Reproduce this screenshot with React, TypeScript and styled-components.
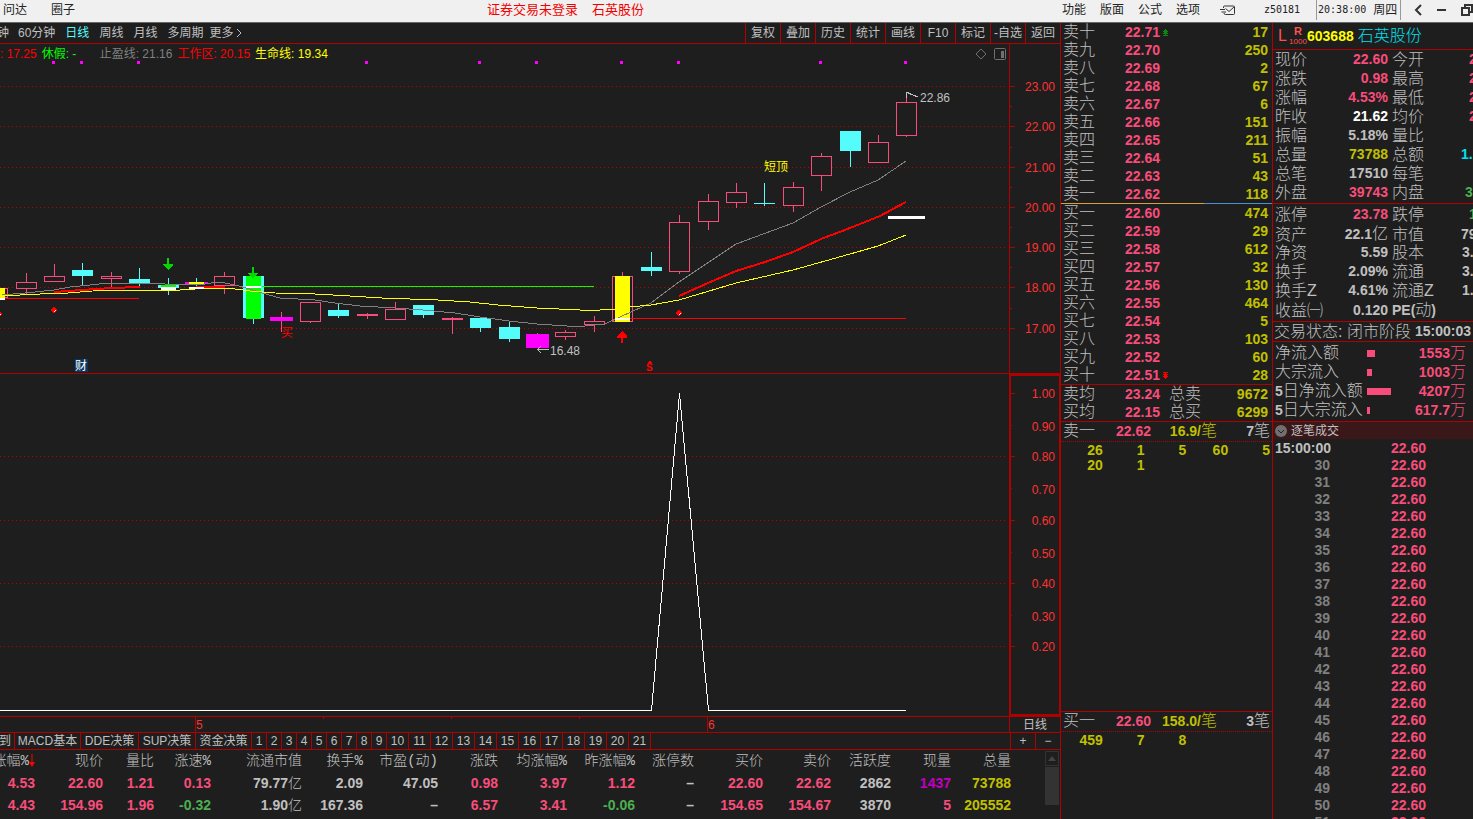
import React from "react";
import styled, { createGlobalStyle } from "styled-components";

const C = {
  bg: "#1e1e1e",
  line: "#b00000",
  text: "#c0c0c0",
  pink: "#f84d7a",
  yellow: "#c0c000",
  cyan: "#54fcfc",
  grey: "#808080",
  green: "#4caf50",
  axis: "#ff3232",
};

const SANS = `"Liberation Sans", "Noto Sans CJK SC", sans-serif`;

const Global = createGlobalStyle`
  * { box-sizing: border-box; }
  html, body { margin: 0; background: ${C.bg}; }
  button { font: inherit; color: inherit; background: none; border: 0; padding: 0; margin: 0; white-space: nowrap; }
`;

/* ---------- shell ---------- */

const Shell = styled.div`
  display: flex;
  flex-direction: column;
  height: 100vh;
  overflow: hidden;
  font: 12px/16px ${SANS};
  color: ${C.text};
`;

const Body = styled.div`
  display: flex;
  flex: 1;
  min-height: 0;
`;

const Workspace = styled.main`
  display: flex;
  flex-direction: column;
  flex: 1;
  min-width: 0;
`;

/* ---------- title bar ---------- */

const TitleBar = styled.header`
  display: flex;
  align-items: center;
  flex: none;
  height: 23px;
  padding-bottom: 2px;
  background: #f0f0f0;
  border-bottom: 1px solid #666;
  color: #222;
  overflow: hidden;
`;

const TitleNav = styled.nav`
  display: flex;
  gap: 24px;
  padding-left: 3px;
`;

const TitleStatus = styled.div`
  display: flex;
  flex: 1;
  justify-content: center;
  gap: 14px;
  padding-right: 5px;
  font-size: 13px;
  color: #f00000;
`;

const TitleTools = styled.div`
  display: flex;
  align-items: center;
  flex: none;
  width: 412px;
  padding-left: 1px;
`;

const MenuSet = styled.div`
  display: flex;
  gap: 14px;
`;

const MailSlot = styled.button`
  display: flex;
  width: 18px;
  margin-left: 20px;
`;

const Account = styled.span`
  flex: none;
  width: 80px;
  padding-left: 12px;
  text-align: center;
  font-family: "DejaVu Sans Mono", "Noto Sans CJK SC", monospace;
  font-size: 10px;
`;

const Clock = styled.div`
  display: flex;
  align-items: center;
  flex: none;
  gap: 7px;
  height: 20px;
  padding: 0 3px 0 1px;
  border-left: 1px solid #999;
  border-right: 1px solid #999;
  white-space: nowrap;
`;

const ClockTime = styled.time`
  font-family: "DejaVu Sans Mono", monospace;
  font-size: 10px;
`;

const WindowButtons = styled.div`
  display: flex;
  flex: none;
  gap: 12px;
  padding-left: 11px;
  button {
    display: flex;
  }
`;

/* ---------- chart toolbar ---------- */

const Toolbar = styled.div`
  display: flex;
  justify-content: space-between;
  flex: none;
  height: 21px;
  border-bottom: 1px solid ${C.line};
`;

const Periods = styled.div`
  display: flex;
  align-items: center;
  gap: 10px;
  overflow: hidden;
`;

const Period = styled.button<{ $on?: boolean; $cut?: boolean; $more?: boolean }>`
  display: flex;
  align-items: center;
  justify-content: flex-end;
  color: ${(p) => (p.$on ? C.cyan : C.text)};
  ${(p) => p.$cut && "width: 9px; margin-right: -1px; overflow: hidden;"}
  ${(p) => p.$more && "margin-left: -4px;"}
`;

const Actions = styled.div`
  display: flex;
`;

const Action = styled.button`
  width: 35px;
  border-left: 1px solid ${C.line};
`;

/* ---------- charts ---------- */

const ChartPane = styled.section<{ $grow: number }>`
  position: relative;
  flex: ${(p) => p.$grow} 1 0;
  min-height: 0;
  svg {
    display: block;
    width: 100%;
    height: 100%;
  }
`;

const Legend = styled.div`
  position: absolute;
  top: 2px;
  left: 0;
  right: 53px;
  display: flex;
  align-items: center;
  gap: 5px;
  height: 16px;
  svg {
    width: 14px;
    height: 14px;
  }
`;

const LegendItem = styled.span<{ $c: string; $w?: number }>`
  color: ${(p) => p.$c};
  white-space: pre;
  min-width: ${(p) => p.$w ?? 0}px;
`;

const LegendTools = styled.div`
  display: flex;
  gap: 5px;
  margin-left: auto;
`;

const DateBar = styled.div`
  display: flex;
  flex: none;
  height: 17px;
  border-top: 1px solid ${C.line};
  border-bottom: 1px solid ${C.line};
`;

const DateTrack = styled.div`
  flex: 1;
  min-width: 0;
  svg {
    display: block;
    width: 100%;
    height: 15px;
  }
`;

const DateMode = styled.button`
  flex: none;
  width: 51px;
  line-height: 14px;
  border-left: 1px solid ${C.line};
`;

const TabBar = styled.div`
  display: flex;
  flex: none;
  height: 17px;
  border-bottom: 1px solid ${C.line};
`;

const Tab = styled.button<{ $w: number }>`
  display: flex;
  justify-content: center;
  width: ${(p) => p.$w}px;
  border-right: 1px solid ${C.line};
`;

const CutTab = styled(Tab)`
  justify-content: flex-end;
  padding-right: 3px;
  overflow: hidden;
`;

const ZoomButtons = styled.div`
  display: flex;
  margin-left: auto;
`;

const ZoomButton = styled.button`
  width: 25px;
  border-left: 1px solid ${C.line};
`;

/* ---------- stock table ---------- */

const TableWrap = styled.div`
  display: flex;
  flex: none;
  height: 69px;
  overflow: hidden;
`;

const TableArea = styled.div`
  flex: 1;
  min-width: 0;
`;

const StockTable = styled.table`
  width: 100%;
  table-layout: fixed;
  border-collapse: collapse;
  font-size: 14px;
  line-height: 22px;
  th,
  td {
    padding: 0;
    text-align: right;
    white-space: nowrap;
  }
  th {
    font-family: "Liberation Mono", "Noto Sans CJK SC", monospace;
    font-weight: 300;
  }
  td {
    font-weight: 700;
  }
`;

const SortHead = styled.span`
  display: flex;
  justify-content: flex-end;
  align-items: center;
`;

const Cell = styled.td<{ $c: string }>`
  color: ${(p) => p.$c};
`;

const ScrollBar = styled.div`
  display: flex;
  flex-direction: column;
  flex: none;
  width: 15px;
  padding: 1px 1px 0 0;
  gap: 1px;
`;

const ScrollUp = styled.button`
  display: flex;
  justify-content: center;
  align-items: center;
  height: 15px;
  border: 1px solid #333;
`;

const ScrollThumb = styled.div`
  height: 38px;
  background: #333;
`;

/* ---------- order book ---------- */

const Book = styled.aside`
  display: flex;
  flex-direction: column;
  flex: none;
  width: 212px;
  border-left: 1px solid ${C.line};
`;

const Cjk = styled.span<{ $s?: number }>`
  font-weight: 300;
  font-size: ${(p) => p.$s ?? 16}px;
`;

const Label = styled.span`
  font-size: 16px;
  font-weight: 300;
  white-space: nowrap;
`;

const Value = styled.span<{ $c?: string; $right?: boolean }>`
  font-size: 14px;
  font-weight: 700;
  color: ${(p) => p.$c ?? C.text};
  text-align: ${(p) => (p.$right ? "right" : "left")};
  white-space: nowrap;
`;

const BookRow = styled.div`
  display: grid;
  grid-template-columns: 62px 38px 6px 1fr;
  align-items: center;
  height: 18px;
  line-height: 18px;
  padding: 0 4px 0 2px;
`;

const TotalsRow = styled(BookRow)`
  grid-template-columns: 62px 44px 32px 1fr;
`;

const Totals = styled.div`
  border-top: 1px solid ${C.line};
  border-bottom: 1px solid ${C.line};
`;

const Balance = styled.div`
  height: 1px;
  background: linear-gradient(90deg, #d9a040 0 68%, #4a8fd0 68%);
`;

const Queue = styled.section<{ $grow?: boolean }>`
  flex: ${(p) => (p.$grow ? "1 1 0" : "none")};
  height: 107px;
  border-bottom: ${(p) => (p.$grow ? `1px solid ${C.line}` : "0")};
`;

const QueueHead = styled.div`
  display: grid;
  grid-template-columns: 53px 36px 65px 1fr;
  height: 20px;
  line-height: 18px;
  padding: 0 2px;
  border-bottom: 1px dotted ${C.line};
`;

const QueueGrid = styled.div`
  display: grid;
  grid-template-columns: repeat(5, 1fr);
  line-height: 15px;
  padding: 1px 2px 0 0;
`;

/* ---------- quote ---------- */

const Quote = styled.aside`
  display: flex;
  flex-direction: column;
  flex: none;
  width: 201px;
  border-left: 1px solid ${C.line};
  overflow: hidden;
`;

const QuoteHead = styled.div`
  display: flex;
  align-items: center;
  flex: none;
  height: 27px;
  padding-left: 5px;
  border-bottom: 1px solid ${C.line};
`;

const MarkL = styled.span`
  width: 11px;
  font-size: 16px;
  font-weight: 500;
  color: #ff5050;
`;

const MarkR = styled.span`
  display: flex;
  flex-direction: column;
  align-items: center;
  width: 18px;
  font-family: "Liberation Sans", sans-serif;
  font-size: 8px;
  line-height: 9px;
  color: #ff5050;
  b {
    font-size: 11px;
    line-height: 11px;
  }
`;

const Name = styled.h1`
  margin: 0 0 0 4px;
  font-size: 16px;
  font-weight: 300;
  color: #00e0f0;
`;

const Block = styled.div`
  flex: none;
  padding: 1px 0 2px;
  border-bottom: 1px solid ${C.line};
`;

const TopBlock = styled(Block)`
  padding: 0 0 1px;
`;

const QuoteRow = styled.div`
  display: grid;
  grid-template-columns: 48px 65px 4px 69px 1fr;
  align-items: center;
  height: 19px;
  line-height: 19px;
  padding-left: 2px;
`;

const Edge = styled(Value)<{ $in: number }>`
  padding-left: ${(p) => p.$in}px;
`;

const Status = styled.div`
  display: flex;
  align-items: center;
  gap: 4px;
  flex: none;
  height: 20px;
  line-height: 19px;
  padding-left: 1px;
  border-bottom: 1px solid ${C.line};
`;

const FlowRow = styled.div`
  display: grid;
  grid-template-columns: 92px 1fr auto;
  align-items: center;
  height: 19px;
  line-height: 19px;
  padding: 0 7px 0 2px;
`;

const FlowBar = styled.i<{ $w: number }>`
  width: ${(p) => p.$w}px;
  height: 7px;
  background: ${C.pink};
`;

const TicksHead = styled.div`
  display: flex;
  align-items: center;
  gap: 4px;
  flex: none;
  height: 17px;
  margin-bottom: 1px;
  padding-left: 2px;
  background: #3a181a;
`;

const TickRow = styled.div`
  display: grid;
  grid-template-columns: 55px 1fr;
  column-gap: 61px;
  flex: none;
  height: 17px;
  line-height: 17px;
  padding-left: 2px;
`;

/* ---------- data ---------- */

const numerals = ["一", "二", "三", "四", "五", "六", "七", "八", "九", "十"];
const sells: [string, string][] = [
  ["22.71", "17"], ["22.70", "250"], ["22.69", "2"], ["22.68", "67"], ["22.67", "6"],
  ["22.66", "151"], ["22.65", "211"], ["22.64", "51"], ["22.63", "43"], ["22.62", "118"],
];
const buys: [string, string][] = [
  ["22.60", "474"], ["22.59", "29"], ["22.58", "612"], ["22.57", "32"], ["22.56", "130"],
  ["22.55", "464"], ["22.54", "5"], ["22.53", "103"], ["22.52", "60"], ["22.51", "28"],
];

type QuoteLine = [string, string, string, string, string?, string?, number?];
const W = "#ffffff";
const quoteTop: QuoteLine[] = [
  ["现价", "22.60", C.pink, "今开", "2", C.pink, 8],
  ["涨跌", "0.98", C.pink, "最高", "2", C.pink, 8],
  ["涨幅", "4.53%", C.pink, "最低", "2", C.pink, 8],
  ["昨收", "21.62", W, "均价", "2", C.pink, 8],
  ["振幅", "5.18%", C.text, "量比"],
  ["总量", "73788", C.yellow, "总额", "1.", "#00e0f0", 0],
  ["总笔", "17510", C.text, "每笔"],
  ["外盘", "39743", C.pink, "内盘", "3", C.green, 4],
];
const quoteMid: QuoteLine[] = [
  ["涨停", "23.78", C.pink, "跌停", "1", C.green, 8],
  ["资产", "22.1亿", C.text, "市值", "79", C.text, 0],
  ["净资", "5.59", C.text, "股本", "3.", C.text, 1],
  ["换手", "2.09%", C.text, "流通", "3.", C.text, 1],
  ["换手Z", "4.61%", C.text, "流通Z", "1.", C.text, 1],
  ["收益㈠", "0.120", C.text, "PE(动)"],
];
const flows: [string, number, string][] = [
  ["净流入额", 8, "1553万"],
  ["大宗流入", 5, "1003万"],
  ["5日净流入额", 24, "4207万"],
  ["5日大宗流入", 3, "617.7万"],
];

const columns: [string, number][] = [
  ["涨幅%", 35], ["现价", 68], ["量比", 51], ["涨速%", 57], ["流通市值", 91], ["换手%", 61],
  ["市盈(动)", 75], ["涨跌", 60], ["均涨幅%", 69], ["昨涨幅%", 68], ["涨停数", 59],
  ["买价", 69], ["卖价", 68], ["活跃度", 60], ["现量", 60], ["总量", 60],
];
const P = C.pink;
const T = C.text;
const stocks: [string, string][][] = [
  [["4.53", P], ["22.60", P], ["1.21", P], ["0.13", P], ["79.77亿", T], ["2.09", T], ["47.05", T], ["0.98", P],
   ["3.97", P], ["1.12", P], ["–", T], ["22.60", P], ["22.62", P], ["2862", T], ["1437", "#c000c0"], ["73788", C.yellow]],
  [["4.43", P], ["154.96", P], ["1.96", P], ["-0.32", C.green], ["1.90亿", T], ["167.36", T], ["–", T], ["6.57", P],
   ["3.41", P], ["-0.06", C.green], ["–", T], ["154.65", P], ["154.67", P], ["3870", T], ["5", P], ["205552", C.yellow]],
];

const tabs: [string, number][] = [["MACD基本", 66], ["DDE决策", 58], ["SUP决策", 57], ["资金决策", 56]];

/* kind, left, body top, body bottom, wick top, wick bottom */
type Candle = ["up" | "down", number, number, number, number, number];
const candles: Candle[] = [
  ["up", -13, 288, 298, 288, 298], ["up", 16, 282, 289, 273, 294], ["up", 44, 276, 282, 264, 282],
  ["down", 72, 270, 276, 263, 285], ["up", 101, 276, 279, 272, 287], ["down", 129, 279, 283, 268, 286],
  ["down", 158, 285, 288, 278, 295], ["up", 214, 276, 286, 272, 294], ["down", 243, 276, 318, 272, 324],
  ["up", 300, 302, 322, 302, 323], ["down", 328, 310, 316, 304, 318], ["up", 357, 314, 316, 313, 319],
  ["up", 385, 309, 320, 302, 320], ["down", 413, 305, 315, 305, 318], ["up", 442, 318, 320, 317, 334],
  ["down", 470, 318, 328, 318, 332], ["down", 499, 327, 339, 322, 342], ["up", 555, 332, 337, 330, 340],
  ["up", 584, 321, 325, 316, 332], ["up", 612, 276, 322, 272, 322], ["down", 641, 267, 271, 252, 276],
  ["up", 669, 222, 272, 215, 274], ["up", 698, 201, 222, 194, 230], ["up", 726, 192, 203, 183, 208],
  ["down", 754, 203, 204, 183, 206], ["up", 783, 187, 206, 182, 212], ["up", 811, 156, 176, 153, 191],
  ["down", 840, 131, 151, 131, 167], ["up", 868, 142, 163, 135, 163], ["up", 896, 102, 136, 93, 137],
];

/* ---------- drawings ---------- */

const Grid = ({ ys }: { ys: number[] }) => (
  <g stroke="#c00000" strokeDasharray="1 3">
    {ys.map((y) => (
      <path key={y} d={`M0 ${y}.5H1006`} />
    ))}
  </g>
);

const CandleShape = ({ c: [kind, x, top, bottom, hi, lo] }: { c: Candle }) => {
  const color = kind === "up" ? P : C.cyan;
  return (
    <g>
      {hi < top && <rect x={x + 10} y={hi} width={1} height={top - hi} fill={color} />}
      {lo > bottom && <rect x={x + 10} y={bottom} width={1} height={lo - bottom} fill={color} />}
      {kind === "up" && bottom - top > 2 ? (
        <rect x={x + 0.5} y={top + 0.5} width={20} height={bottom - top - 1} fill={C.bg} stroke={color} />
      ) : (
        <rect x={x} y={top} width={21} height={bottom - top} fill={color} />
      )}
    </g>
  );
};

const Dot = ({ x, y }: { x: number; y: number }) => (
  <g>
    <path d={`M${x - 1} ${y - 3}h2v1h1v1h1v2h-1v1h-1v1h-2v-1h-1v-1h-1v-2h1v-1h1z`} fill="#f00" />
    <path d={`M${x} ${y + 1}h1v-1h1v1h-1v1h-1z`} fill="#fff" />
  </g>
);

const PriceChart = () => (
  <svg viewBox="0 44 1060 329" preserveAspectRatio="xMaxYMin slice" shapeRendering="crispEdges" fontSize={12} role="img" aria-label="日线">
    <Grid ys={[86, 126, 167, 207, 247, 287, 328]} />
    <g fill="#f0f">
      {[53, 81, 138, 366, 479, 536, 621, 678, 820, 905].map((x) => (
        <rect key={x} x={x - 1} y={61} width={3} height={3} />
      ))}
    </g>
    {candles.map((c) => (
      <CandleShape key={c[1]} c={c} />
    ))}
    <rect x={281} y={312} width={1} height={20} fill={P} />
    <rect x={537} y={333} width={1} height={2} fill={P} />
    <rect x={196} y={278} width={1} height={8} fill={C.cyan} />
    <g fill="#f0f">
      <rect x={185} y={282} width={23} height={2} />
      <rect x={270} y={317} width={23} height={4} />
      <rect x={526} y={334} width={23} height={14} />
    </g>
    <g fill="#0f0">
      <rect x={161} y={285} width={15} height={2} />
      <rect x={246} y={276} width={15} height={43} />
    </g>
    <g fill="#ff0">
      <rect x={0} y={288} width={5} height={10} />
      <rect x={189} y={282} width={15} height={2} />
      <rect x={615} y={276} width={15} height={46} />
    </g>
    <g fill="none">
      <path d="M0 298.5H139M622 318.5H906" stroke="#f00" />
      <path d="M262 286.5H594" stroke="#0f0" />
      <path d="M54 292L82 290L111 288L140 287M196 287H225M679 296L708 283L736 271L765 262L793 252L821 239L850 228L880 216L906 202" stroke="#f00" strokeWidth={2} />
      <path d="M2 295L25 293L54 290L70 287L90 285L108 283L154 283L165 284L205 284L218 282L225 283L235 285L250 289L262 293L280 298L315 300L335 303L360 306L395 308L423 310L455 313L480 317L509 321L537 324L567 326L585 326L605 324L622 316L651 303L679 282L736 244L793 223L821 207L850 192L878 180L906 161" stroke="#808080" />
      <path d="M0 296L40 294L68 293L105 290L180 290L210 288L228 288L250 291L275 293L315 294L350 296L382 298L410 299L438 300L470 302L498 305L537 308L580 310L600 310L615 309L630 307L651 305L679 300L736 283L793 270L850 254L878 246L906 235" stroke="#ff0" />
    </g>
    <g fill="#fff">
      <rect x={0} y={298} width={5} height={2} />
      <rect x={161} y={287} width={15} height={3} />
      <rect x={189} y={287} width={15} height={2} />
      <rect x={246} y={286} width={15} height={2} />
      <rect x={615} y={318} width={15} height={2} />
      <rect x={888} y={216} width={37} height={3} />
    </g>
    <g fill="#00d800">
      <path d="M167 258h2v6h4v1l-5 5l-5-5v-1h4z" />
      <path d="M252 267h2v6h4v1l-5 4l-5-4v-1h4z" />
    </g>
    <path d="M622 331l5 5v2h-4v5h-2v-5h-4v-2z" fill="#f00" />
    <Dot x={54} y={310} />
    <Dot x={679} y={313} />
    <Dot x={-1} y={314} />
    <path d="M647 363l3-2l3 2z" fill="#f00" />
    <text x={646} y={371} fill="#f00" fontWeight={700} fontSize={10}>S</text>
    <text x={281} y={337} fill="#f00">买</text>
    <rect x={75} y={359} width={13} height={13} fill="#0a3563" />
    <text x={75} y={370} fill="#fff">财</text>
    <text x={764} y={171} fill="#ff0">短顶</text>
    <g fill={T}>
      <text x={920} y={102}>22.86</text>
      <text x={550} y={355}>16.48</text>
    </g>
    <path d="M906.5 98V92.5H909M908 93L918 97M549 349.5H537.5M541 346L537.5 349.5L541 353" stroke={T} fill="none" />
    <g stroke={C.line}>
      <path d="M1009.5 44V373" />
      {[86, 126, 167, 207, 247, 287, 328].map((y) => (
        <path key={y} d={`M1010 ${y}.5h5`} />
      ))}
      {[106, 147, 187, 227, 267, 308].map((y) => (
        <path key={y} d={`M1010 ${y}.5h2`} />
      ))}
    </g>
    <g fill={C.axis} textAnchor="end">
      {[86, 126, 167, 207, 247, 287, 328].map((y, i) => (
        <text key={y} x={1055} y={y + 5}>{(23 - i).toFixed(2)}</text>
      ))}
    </g>
  </svg>
);

const SignalChart = () => (
  <svg viewBox="0 373 1060 343" preserveAspectRatio="xMaxYMin slice" shapeRendering="crispEdges" fontSize={12} role="img" aria-label="指标">
    <Grid ys={[456, 520, 583, 646]} />
    <path d="M0 373.5H1060" stroke={C.line} />
    <path d="M0 710.5H651.5L679.5 393.5L708.5 710.5H906" stroke="#fff" fill="none" />
    <rect x={1010} y={375} width={50} height={340} fill="none" stroke={C.line} strokeWidth={2} />
    <g stroke={C.line}>
      {[393, 456, 520, 583, 646].map((y) => (
        <path key={y} d={`M1011 ${y}.5h4`} />
      ))}
      {[425, 488, 552, 615].map((y) => (
        <path key={y} d={`M1011 ${y}.5h1`} />
      ))}
    </g>
    <g fill={C.axis} textAnchor="end">
      {[393, 426, 456, 489, 520, 553, 583, 616, 646].map((y, i) => (
        <text key={y} x={1055} y={y + 5}>{(1 - i / 10).toFixed(2)}</text>
      ))}
    </g>
  </svg>
);

/* Chinese units inside a figure are set light, the digits stay bold. */
const Mixed = ({ s, size }: { s: string; size?: number }) => (
  <>
    {s.split(/([\u3200-\u9fff]+)/).map((part, i) =>
      i % 2 ? <Cjk key={i} $s={size}>{part}</Cjk> : part
    )}
  </>
);

const LevelMark = ({ down }: { down?: boolean }) => (
  <svg width="6" height="7" viewBox="0 0 6 7" shapeRendering="crispEdges" fill={down ? "#f00" : "#0a8a0a"}>
    <path d={down ? "M0 0h5v1h-2v1h2v1h-1v1h1v1h-1v1h-1v1h-1v-1h-1v-1h-1v-1h1v-1h-1v-1h2v-1h-2z" : "M2 0h1v1h1v1h1v1h-1v1h1v1h-2v1h2v1h-5v-1h2v-1h-2v-1h1v-1h-1v-1h1v-1h1z"} />
  </svg>
);

const Levels = ({ side }: { side: "卖" | "买" }) => {
  const rows = side === "卖" ? sells : buys;
  return (
    <div>
      {rows.map(([price, vol], i) => (
        <BookRow key={price}>
          <Label>{side}{numerals[side === "卖" ? 9 - i : i]}</Label>
          <Value $c={P}>{price}</Value>
          {side === "卖" && i === 0 ? <LevelMark /> : side === "买" && i === 9 ? <LevelMark down /> : <i />}
          <Value $c={C.yellow} $right>{vol}</Value>
        </BookRow>
      ))}
    </div>
  );
};

const QuoteLines = ({ rows }: { rows: QuoteLine[] }) => (
  <>
    {rows.map(([a, v, c, b, v2, c2, inset]) => (
      <QuoteRow key={a}>
        <Label>{a}</Label>
        <Value $c={c} $right><Mixed s={v} /></Value>
        <i />
        {b.startsWith("PE") ? <Value><Mixed s={b} /></Value> : <Label>{b}</Label>}
        {v2 && <Edge $c={c2} $in={inset ?? 0}>{v2}</Edge>}
      </QuoteRow>
    ))}
  </>
);

const QueueBlock = (p: { name: string; price: string; avg: string; count: string; lots: string[]; grow?: boolean }) => (
  <Queue $grow={p.grow}>
    <QueueHead>
      <Label>{p.name}</Label>
      <Value $c={P}>{p.price}</Value>
      <Value $c={C.yellow} $right><Mixed s={p.avg} /></Value>
      <Value $right><Mixed s={p.count} /></Value>
    </QueueHead>
    <QueueGrid>
      {p.lots.map((n, i) => (
        <Value key={i} $c={C.yellow} $right>{n}</Value>
      ))}
    </QueueGrid>
  </Queue>
);

export default function App() {
  return (
    <Shell>
      <Global />
      <TitleBar>
        <TitleNav>
          <button>问达</button>
          <button>圈子</button>
        </TitleNav>
        <TitleStatus>
          <span>证券交易未登录</span>
          <span>石英股份</span>
        </TitleStatus>
        <TitleTools>
          <MenuSet>
            {["功能", "版面", "公式", "选项"].map((m) => (
              <button key={m}>{m}</button>
            ))}
          </MenuSet>
          <MailSlot aria-label="消息">
            <svg width="16" height="11" viewBox="0 0 16 11" fill="none" stroke="#333">
              <path d="M3.5 3V2Q3.5 1 4.500 1H13.500Q14.500 1 14.500 2V8.500Q14.500 9.500 13.500 9.500H5.500Q4 9.500 4 8M0 4.500H5M1.500 7H6M5.500 3.500L9 6.500L14 2" />
            </svg>
          </MailSlot>
          <Account>z50181</Account>
          <Clock>
            <ClockTime>20:38:00</ClockTime>
            <span>周四</span>
          </Clock>
          <WindowButtons>
            <button aria-label="返回">
              <svg width="12" height="14" viewBox="0 0 12 14" fill="none" stroke="#333" strokeWidth="2"><path d="M9 2L4 7L9 12" /></svg>
            </button>
            <button aria-label="最小化">
              <svg width="12" height="14" viewBox="0 0 12 14" fill="#333"><path d="M1 6h9v2h-9z" /></svg>
            </button>
            <button aria-label="还原">
              <svg width="14" height="14" viewBox="0 0 14 14" fill="none" stroke="#333" strokeWidth="2"><path d="M2 5h7v7h-7zM5 5V2h7v7h-3" /></svg>
            </button>
          </WindowButtons>
        </TitleTools>
      </TitleBar>

      <Body>
        <Workspace>
          <Toolbar>
            <Periods>
              <Period $cut>钟</Period>
              <Period>60分钟</Period>
              <Period $on>日线</Period>
              <Period>周线</Period>
              <Period>月线</Period>
              <Period>多周期</Period>
              <Period $more>
                更多
                <svg width="10" height="12" viewBox="0 0 10 12" fill="none" stroke={T}><path d="M4 2L8 6L4 10" /></svg>
              </Period>
            </Periods>
            <Actions>
              {["复权", "叠加", "历史", "统计", "画线", "F10", "标记", "-自选", "返回"].map((a) => (
                <Action key={a}>{a}</Action>
              ))}
            </Actions>
          </Toolbar>

          <ChartPane $grow={329}>
            <PriceChart />
            <Legend>
              <LegendItem $c="#f00">: 17.25</LegendItem>
              <LegendItem $c="#0f0" $w={53}>休假: -</LegendItem>
              <LegendItem $c="#808080">止盈线: 21.16</LegendItem>
              <LegendItem $c="#f00">工作区: 20.15</LegendItem>
              <LegendItem $c="#ff0">生命线: 19.34</LegendItem>
              <LegendTools>
                <svg viewBox="0 0 14 14" fill="none" stroke="#707070"><path d="M7 2L12 7L7 12L2 7z" /></svg>
                <svg viewBox="0 0 14 14" fill="none" stroke="#707070"><rect x="1.500" y="1.500" width="11" height="11" rx="1" /><path d="M8 4h3v7h-3z" fill="#707070" stroke="none" /></svg>
              </LegendTools>
            </Legend>
          </ChartPane>
          <ChartPane $grow={343}>
            <SignalChart />
          </ChartPane>

          <DateBar>
            <DateTrack>
              <svg viewBox="0 0 1009 15" preserveAspectRatio="xMaxYMid slice" fontSize={12} fill={C.axis}>
                <path d="M195.500 0v15M707.500 0v15M323.500 0v2M451.500 0v2M579.500 0v2" stroke={C.line} />
                <text x={196} y={12}>5</text>
                <text x={708} y={12}>6</text>
              </svg>
            </DateTrack>
            <DateMode>日线</DateMode>
          </DateBar>

          <TabBar>
            <CutTab $w={15}>到</CutTab>
            {tabs.map(([t, w]) => (
              <Tab key={t} $w={w}>{t}</Tab>
            ))}
            {Array.from({ length: 21 }, (_, i) => (
              <Tab key={i} $w={i < 9 ? 15 : 22}>{i + 1}</Tab>
            ))}
            <ZoomButtons>
              <ZoomButton>+</ZoomButton>
              <ZoomButton>−</ZoomButton>
            </ZoomButtons>
          </TabBar>

          <TableWrap>
            <TableArea>
              <StockTable>
                <colgroup>
                  {columns.map(([name, w]) => (
                    <col key={name} width={w} />
                  ))}
                  <col />
                </colgroup>
                <thead>
                  <tr>
                    {columns.map(([name], i) => (
                      <th key={name} scope="col">
                        {i === 0 ? (
                          <SortHead>
                            {name}
                            <svg width="6" height="14" viewBox="0 0 6 14" style={{ flex: "none" }} fill="#f00"><path d="M2.500 0h1v8h2.500l-3 5l-3-5h2.500z" /></svg>
                          </SortHead>
                        ) : name}
                      </th>
                    ))}
                    <th />
                  </tr>
                </thead>
                <tbody>
                  {stocks.map((row, r) => (
                    <tr key={r}>
                      {row.map(([v, c], i) => (
                        <Cell key={i} $c={c}><Mixed s={v} size={14} /></Cell>
                      ))}
                      <td />
                    </tr>
                  ))}
                </tbody>
              </StockTable>
            </TableArea>
            <ScrollBar>
              <ScrollUp aria-label="向上">
                <svg width="8" height="5" viewBox="0 0 8 5" fill="#444"><path d="M0 5L4 0L8 5z" /></svg>
              </ScrollUp>
              <ScrollThumb />
            </ScrollBar>
          </TableWrap>
        </Workspace>

        <Book>
          <Levels side="卖" />
          <Balance />
          <Levels side="买" />
          <Totals>
            <TotalsRow>
              <Label>卖均</Label>
              <Value $c={P}>23.24</Value>
              <Label>总卖</Label>
              <Value $c={C.yellow} $right>9672</Value>
            </TotalsRow>
            <TotalsRow>
              <Label>买均</Label>
              <Value $c={P}>22.15</Value>
              <Label>总买</Label>
              <Value $c={C.yellow} $right>6299</Value>
            </TotalsRow>
          </Totals>
          <QueueBlock grow name="卖一" price="22.62" avg="16.9/笔" count="7笔" lots={["26", "1", "5", "60", "5", "20", "1"]} />
          <QueueBlock name="买一" price="22.60" avg="158.0/笔" count="3笔" lots={["459", "7", "8"]} />
        </Book>

        <Quote>
          <QuoteHead>
            <MarkL>L</MarkL>
            <MarkR><b>R</b>1000</MarkR>
            <Value $c="#ff0">603688</Value>
            <Name>石英股份</Name>
          </QuoteHead>
          <TopBlock><QuoteLines rows={quoteTop} /></TopBlock>
          <Block><QuoteLines rows={quoteMid} /></Block>
          <Status>
            <Label>交易状态: 闭市阶段</Label>
            <Value>15:00:03</Value>
          </Status>
          <Block>
            {flows.map(([name, w, v]) => (
              <FlowRow key={name}>
                <Value><Mixed s={name} /></Value>
                <FlowBar $w={w} />
                <Value $c={P} $right><Mixed s={v} /></Value>
              </FlowRow>
            ))}
          </Block>
          <TicksHead>
            <svg width="12" height="12" viewBox="0 0 12 12"><circle cx="6" cy="6" r="6" fill="#707070" /><path d="M3 5L6 8L9 5" fill="none" stroke="#222" strokeWidth="1" /></svg>
            逐笔成交
          </TicksHead>
          <TickRow>
            <Value>15:00:00</Value>
            <Value $c={P}>22.60</Value>
          </TickRow>
          {Array.from({ length: 22 }, (_, i) => (
            <TickRow key={i}>
              <Value $c={C.grey} $right>{30 + i}</Value>
              <Value $c={P}>22.60</Value>
            </TickRow>
          ))}
        </Quote>
      </Body>
    </Shell>
  );
}
